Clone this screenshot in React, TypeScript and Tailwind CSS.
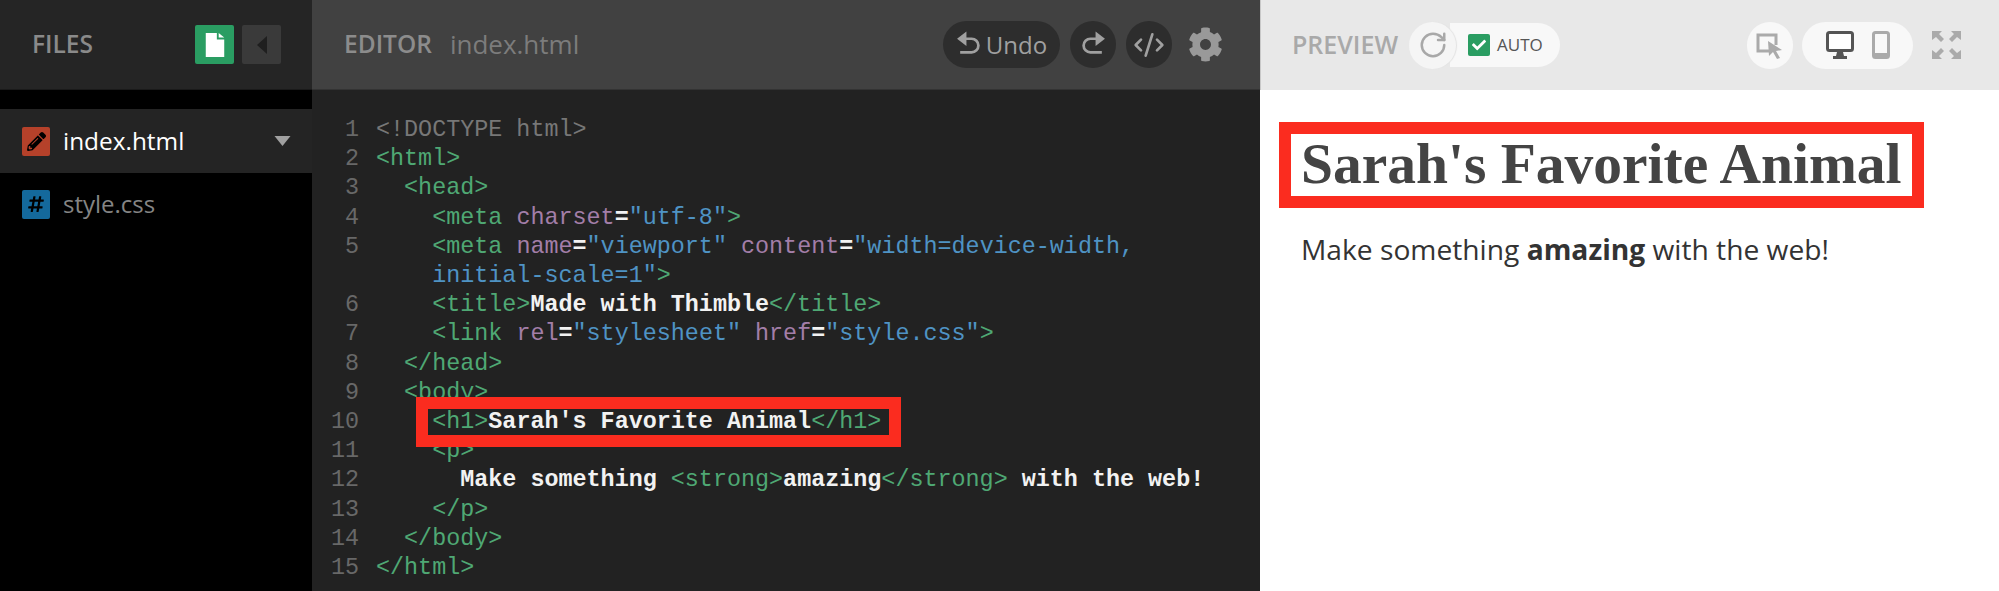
import { Fragment } from "react";
import { FaCheck, FaCog, FaHashtag, FaPencilAlt } from "react-icons/fa";
import { CodeXml, RotateCw } from "lucide-react";

const TAG = "text-[#4fa874]";
const ATTR = "text-[#a37ea8]";
const VAL = "text-[#4f93c4]";
const GRAY = "text-[#777777]";
const TXT = "text-[#f2f2f2] font-bold";

type Tok = [string, string];

const CODE: { n?: number; toks: Tok[]; mark?: boolean }[] = [
  { n: 1, toks: [["<!DOCTYPE html>", GRAY]] },
  { n: 2, toks: [["<html>", TAG]] },
  { n: 3, toks: [["  <head>", TAG]] },
  {
    n: 4,
    toks: [
      ["    <meta ", TAG],
      ["charset", ATTR],
      ["=", TXT],
      ['"utf-8"', VAL],
      [">", TAG],
    ],
  },
  {
    n: 5,
    toks: [
      ["    <meta ", TAG],
      ["name", ATTR],
      ["=", TXT],
      ['"viewport"', VAL],
      [" ", TAG],
      ["content", ATTR],
      ["=", TXT],
      ['"width=device-width,', VAL],
    ],
  },
  {
    toks: [
      ['    initial-scale=1"', VAL],
      [">", TAG],
    ],
  },
  {
    n: 6,
    toks: [
      ["    <title>", TAG],
      ["Made with Thimble", TXT],
      ["</title>", TAG],
    ],
  },
  {
    n: 7,
    toks: [
      ["    <link ", TAG],
      ["rel", ATTR],
      ["=", TXT],
      ['"stylesheet"', VAL],
      [" ", TAG],
      ["href", ATTR],
      ["=", TXT],
      ['"style.css"', VAL],
      [">", TAG],
    ],
  },
  { n: 8, toks: [["  </head>", TAG]] },
  { n: 9, toks: [["  <body>", TAG]] },
  {
    n: 10,
    mark: true,
    toks: [
      ["<h1>", TAG],
      ["Sarah's Favorite Animal", TXT],
      ["</h1>", TAG],
    ],
  },
  { n: 11, toks: [["    <p>", TAG]] },
  {
    n: 12,
    toks: [
      ["      ", TXT],
      ["Make something ", TXT],
      ["<strong>", TAG],
      ["amazing", TXT],
      ["</strong>", TAG],
      [" with the web!", TXT],
    ],
  },
  { n: 13, toks: [["    </p>", TAG]] },
  { n: 14, toks: [["  </body>", TAG]] },
  { n: 15, toks: [["</html>", TAG]] },
];

function CodeLine({ toks }: { toks: Tok[] }) {
  return (
    <>
      {toks.map(([t, c], i) => (
        <span key={i} className={c}>
          {t}
        </span>
      ))}
    </>
  );
}

function UndoIcon({ flip }: { flip?: boolean }) {
  return (
    <svg
      viewBox="0 0 24 28"
      className={flip ? "h-[30px] w-[25px] -scale-x-100" : "h-[30px] w-[25px]"}
      fill="none"
      stroke="#a0a0a0"
      strokeWidth="2.6"
    >
      <path d="M7 8h8a6.5 6.5 0 0 1 0 13H4" />
      <path d="M10 1v14L1 8z" fill="#a0a0a0" stroke="none" />
    </svg>
  );
}

export default function App() {
  return (
    <div className="flex h-[591px] w-[1999px] overflow-hidden font-['Open_Sans',sans-serif]">
      {/* Files */}
      <aside className="w-[312px] shrink-0 bg-black">
        <div className="flex h-[90px] items-center border-b border-[#1a1a1a] bg-[#252525] pl-8 pr-[31px]">
          <span className="text-[24.5px] font-semibold text-[#8a8a8a]">FILES</span>
          <button className="ml-auto flex h-[39px] w-[39px] items-center justify-center rounded-[2px] bg-[#2a9d62]">
            <svg viewBox="0 0 20 26" className="h-[24px] w-[20px]" fill="#ffffff">
              <path d="M0 0h12v7h8v19H0zM14 0l6 5h-6z" />
            </svg>
          </button>
          <button className="ml-2 flex h-[39px] w-[39px] items-center justify-center rounded-[2px] bg-[#3a3a3a]">
            <svg viewBox="0 0 10 18" className="h-[18px] w-[10px]" fill="#1f1f1f">
              <path d="M10 0v18L0 9z" />
            </svg>
          </button>
        </div>
        <div className="mt-[19px] flex h-[64px] items-center bg-[#242424] pl-[22px] pr-[21px]">
          <span className="flex h-[29px] w-[28px] items-center justify-center rounded-[2px] bg-[#b5412a]">
            <FaPencilAlt className="h-[19px] w-[19px] text-black" />
          </span>
          <span className="ml-[13px] text-[24.4px] text-white">index.html</span>
          <svg viewBox="0 0 16 10" className="ml-auto h-[10px] w-[17px]" fill="#a0a0a0">
            <path d="M0 0h16L8 10z" />
          </svg>
        </div>
        <div className="flex h-[62px] items-center pl-[22px]">
          <span className="flex h-[29px] w-[28px] items-center justify-center rounded-[2px] bg-[#14699c]">
            <FaHashtag className="h-[18px] w-[18px] text-black" />
          </span>
          <span className="ml-[13px] text-[24px] text-[#858585]">style.css</span>
        </div>
      </aside>

      {/* Editor */}
      <main className="flex w-[948px] shrink-0 flex-col bg-[#222222]">
        <div className="flex h-[90px] shrink-0 items-center border-b border-[#333333] bg-[#414141] pl-8 pr-[37px]">
          <span className="text-[24.5px] font-semibold text-[#8c8c8c]">EDITOR</span>
          <span className="ml-[18px] text-[26px] text-[#7c7c7c]">index.html</span>
          <div className="ml-auto flex h-[47px] w-[117px] items-center justify-center gap-[5px] rounded-full bg-[#2d2d2d]">
            <UndoIcon />
            <span className="text-[24px] text-[#a0a0a0]">Undo</span>
          </div>
          <div className="ml-[10px] flex h-[47px] w-[46px] items-center justify-center rounded-full bg-[#2d2d2d]">
            <UndoIcon flip />
          </div>
          <div className="ml-[10px] flex h-[47px] w-[46px] items-center justify-center rounded-full bg-[#2d2d2d]">
            <CodeXml className="h-[32px] w-[32px] text-[#a0a0a0]" strokeWidth={2} />
          </div>
          <FaCog className="ml-[16px] h-[35px] w-[35px] text-[#999999]" />
        </div>
        <div className="whitespace-pre pt-[26px] font-['Liberation_Mono',monospace] text-[23.4px] leading-[29.2px]">
          {CODE.map((line, i) => (
            <div key={i} className="flex">
              <span className="w-[47px] shrink-0 text-right text-[#686868]">{line.n ?? ""}</span>
              <span className="ml-[17px]">
                {line.mark ? (
                  <Fragment>
                    {"    "}
                    <span className="relative inline-block">
                      <span className="absolute -left-[16px] -right-[20px] -top-[11px] -bottom-[10px] border-[12px] border-[#fb2c1f]" />
                      <CodeLine toks={line.toks} />
                    </span>
                  </Fragment>
                ) : (
                  <CodeLine toks={line.toks} />
                )}
              </span>
            </div>
          ))}
        </div>
      </main>

      {/* Preview */}
      <section className="flex min-w-0 flex-1 flex-col bg-white">
        <div className="flex h-[90px] shrink-0 items-center border-l border-[#c8c8c8] bg-[#e8e8e8] pl-[31px] pr-[38px]">
          <span className="text-[25px] font-semibold text-[#a9a9a9]">PREVIEW</span>
          <div className="relative z-10 ml-[11px] flex h-[47px] w-[47px] items-center justify-center rounded-full bg-[#f5f5f5] shadow-[1px_0_1px_#e2e2e2]">
            <RotateCw className="h-[30px] w-[30px] text-[#a8a8a8]" strokeWidth={2} />
          </div>
          <div className="-ml-[6px] flex h-[44px] w-[110px] items-center rounded-r-full bg-[#f8f8f8] pl-[18px]">
            <span className="flex h-[22px] w-[22px] items-center justify-center rounded-[2px] bg-[#2a9d62]">
              <FaCheck className="h-[14px] w-[14px] text-white" />
            </span>
            <span className="ml-[7px] text-[17px] text-[#555555]">AUTO</span>
          </div>
          <div className="ml-auto flex h-[47px] w-[46px] items-center justify-center rounded-full bg-[#f8f8f8]">
            <svg viewBox="0 0 28 28" className="h-[28px] w-[28px]">
              <path d="M20 14V4H2v16h11" fill="none" stroke="#aaaaaa" strokeWidth="3" />
              <path d="M12 10l14 9-6 1 4 7-3 1-4-7-4 4z" fill="#aaaaaa" />
            </svg>
          </div>
          <div className="ml-[9px] flex h-[47px] w-[111px] items-center justify-center gap-[18px] rounded-full bg-[#f8f8f8]">
            <svg viewBox="0 0 28 28" className="h-[28px] w-[28px]">
              <rect x="1.5" y="1.5" width="25" height="18" rx="2" fill="#ffffff" stroke="#555555" strokeWidth="3" />
              <path d="M11 21h6l1 4h3v3H7v-3h3z" fill="#555555" />
            </svg>
            <svg viewBox="0 0 18 28" className="h-[28px] w-[18px]">
              <rect x="1.5" y="1.5" width="15" height="25" rx="2" fill="#f8f8f8" stroke="#aaaaaa" strokeWidth="3" />
              <rect x="1" y="22" width="16" height="5" fill="#aaaaaa" />
            </svg>
          </div>
          <svg viewBox="0 0 29 28" className="ml-[19px] h-[28px] w-[29px]" fill="#aaaaaa">
            <path d="M0 0h10l-3 3 5 5-3 3-5-5-4 3zM29 0H19l3 3-5 5 3 3 5-5 4 3zM0 28h10l-3-3 5-5-3-3-5 5-4-3zM29 28H19l3-3-5-5 3-3 5 5 4-3z" />
          </svg>
        </div>
        <div className="pl-[19px] pt-[32px]">
          <h1 className="inline-block border-[12px] border-[#fb2c1f] px-[10px] pb-[3px] font-['Liberation_Serif',serif] text-[57.5px] font-bold leading-[59px] whitespace-nowrap text-[#444444]">
            Sarah's Favorite Animal
          </h1>
          <p className="mt-[20px] pl-[22px] text-[28.2px] text-[#333333]">
            Make something <strong className="font-bold">amazing</strong> with the web!
          </p>
        </div>
      </section>
    </div>
  );
}
